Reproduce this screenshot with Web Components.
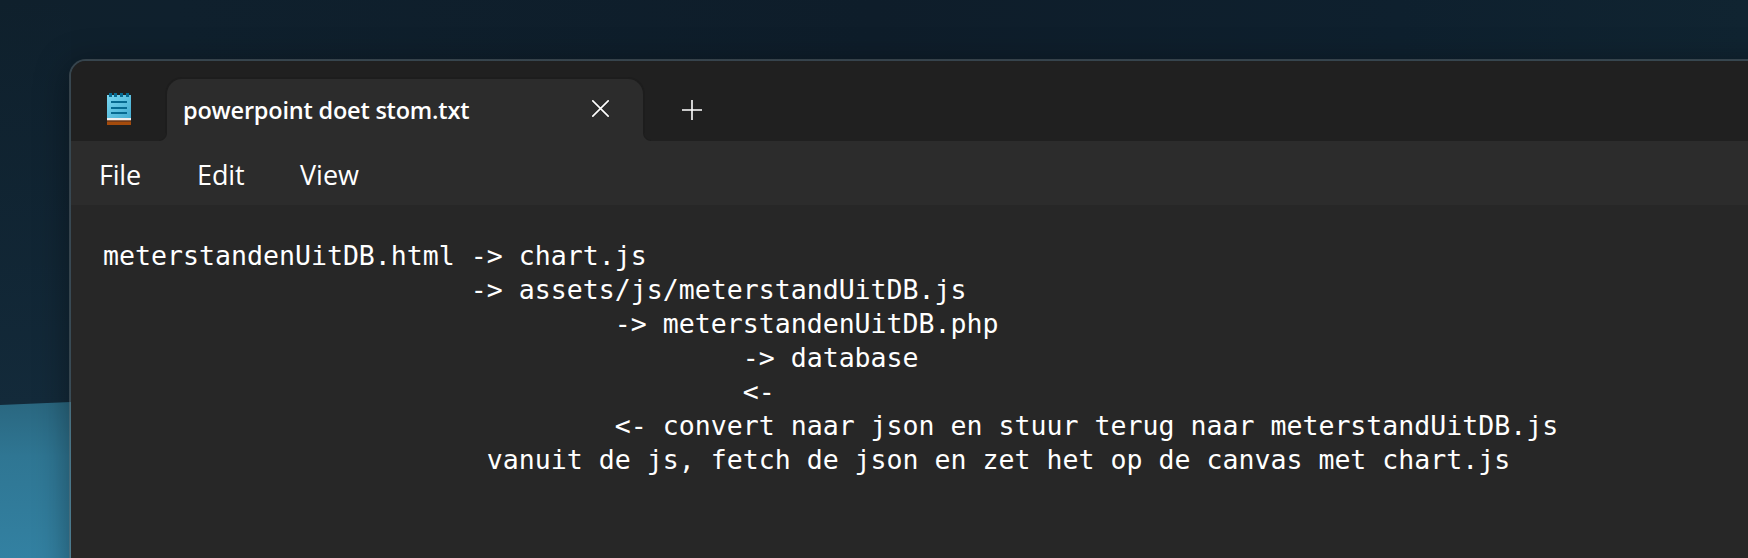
<!DOCTYPE html>
<html lang="nl">
<head>
<meta charset="utf-8">
<title>powerpoint doet stom.txt</title>
<style>
html, body { margin: 0; height: 100%; overflow: hidden; background: #0e1c28; }
</style>
</head>
<body>
<desk-top>
  <note-window>
    <title-bar slot="title"><note-tab>powerpoint doet stom.txt</note-tab></title-bar>
    <menu-bar slot="menu">
      <menu-entry style="--w:98px;--ls:-.2px">File</menu-entry>
      <menu-entry style="--w:103px;--ls:-.1px">Edit</menu-entry>
      <menu-entry style="--w:100px;--ls:0px">View</menu-entry>
    </menu-bar>
    <text-editor>meterstandenUitDB.html -&gt; chart.js
                       -&gt; assets/js/meterstandUitDB.js
                                -&gt; meterstandenUitDB.php
                                        -&gt; database
                                        &lt;-
                                &lt;- convert naar json en stuur terug naar meterstandUitDB.js
                        vanuit de js, fetch de json en zet het op de canvas met chart.js</text-editor>
  </note-window>
</desk-top>
<script>
function define(name, html) {
  customElements.define(name, class extends HTMLElement {
    constructor() {
      super();
      this.attachShadow({ mode: "open" }).innerHTML = html.trim();
    }
  });
}

define("desk-top", `
<style>
:host { display: grid; grid-template: 558px / 1748px; overflow: hidden; }
svg { grid-area: 1 / 1; display: block; }
.layer { grid-area: 1 / 1; padding: 59px 0 0 69px; display: grid; z-index: 1; }
</style>
<svg width="1748" height="558" viewBox="0 0 1748 558">
  <defs>
    <linearGradient id="sky" x1="0" x2="1"><stop offset="0" stop-color="#0f202c"/><stop offset=".1" stop-color="#0f202d"/><stop offset=".5" stop-color="#0e1d2a"/><stop offset=".8" stop-color="#0e202e"/><stop offset="1" stop-color="#102431"/></linearGradient>
    <linearGradient id="side" x1="0" y1="0" x2="0" y2="1"><stop offset="0" stop-color="#112838" stop-opacity="0"/><stop offset="1" stop-color="#132a3a"/></linearGradient>
    <linearGradient id="sea" x1="0" y1="0" x2="0" y2="1"><stop offset="0" stop-color="#2a6780"/><stop offset=".35" stop-color="#2f7693"/><stop offset="1" stop-color="#3381a2"/></linearGradient>
  </defs>
  <path fill="url(#sky)" d="M0 0h1748v558H0z"/>
  <path fill="url(#side)" d="M0 0h71v405H0z"/>
  <path fill="url(#sea)" d="M0 405L71 402V558H0z"/>
</svg>
<div class="layer"><slot></slot></div>`);

define("note-window", `
<style>
:host { display: block; height: 520px; width: 1720px; box-sizing: border-box; border: 2px solid rgba(105,115,120,.45); border-radius: 17px 0 0 0; box-shadow: 0 6px 34px rgba(0,0,0,.38); background: #272727; background-clip: padding-box; overflow: hidden; }
</style>
<slot name="title"></slot><slot name="menu"></slot><slot></slot>`);

define("title-bar", `
<style>
:host { display: flex; height: 80px; background: #202020; box-sizing: border-box; }
.book { display: block; margin: 31px 34px 0 34px; }
.plus { display: block; margin: 39px 0 0 39px; }
</style>
<svg class="book" width="28" height="34" viewBox="0 0 28 34">
  <defs><linearGradient id="p" x1="0" y1="0" x2="1" y2="1"><stop offset="0" stop-color="#78d6f0"/><stop offset="1" stop-color="#43abd0"/></linearGradient></defs>
  <path fill="#a44b0c" d="M2 28h24v5H2z"/><path fill="#733a17" d="M2 28h24v2H2z"/>
  <path fill="#eee" d="M2 26h24v2.2H2z"/>
  <path fill="url(#p)" d="M2 3h24v23H2z"/>
  <path stroke="#066a91" stroke-width="3" d="M5.500 1v4M10.500 1v4M16.500 1v4M22.500 1v4"/>
  <path stroke="#066a91" stroke-width="2" d="M6 10h16M6 16h16M6 21h16"/>
</svg>
<slot></slot>
<svg class="plus" width="20" height="20" viewBox="0 0 20 20"><path stroke="#fff" stroke-width="1.600" d="M10 0v20M0 10h20"/></svg>`);

define("note-tab", `
<style>
:host { display: flex; position: relative; width: 476px; height: 62px; margin-top: 18px; box-sizing: border-box; background: #2c2c2c; border-radius: 15px 15px 0 0; box-shadow: 0 0 0 2px #1d1d1d; color: #fff; font: 600 23.500px/30px "Open Sans", sans-serif; }
.name { width: 409px; padding: 16px 0 0 16px; box-sizing: border-box; white-space: pre; letter-spacing: -.2px; }
.x { display: block; margin: 21px 0 0 16px; }
.foot { position: absolute; bottom: 0; width: 8px; height: 8px; }
.l { right: 100%; background: radial-gradient(circle at 0 0, #202020 6px, #1d1d1d 7.500px, #2c2c2c 8.500px); }
.r { left: 100%; background: radial-gradient(circle at 100% 0, #202020 6px, #1d1d1d 7.500px, #2c2c2c 8.500px); }
</style>
<div class="name"><slot></slot></div>
<svg class="x" width="17" height="17" viewBox="0 0 17 17"><path stroke="#fff" stroke-width="1.600" d="M.3.300l16.400 16.400M16.700.300L.3 16.700"/></svg>
<i class="foot l"></i><i class="foot r"></i>`);

define("menu-bar", `
<style>
:host { display: flex; position: relative; height: 64px; background: #2c2c2c; padding-left: 28px; box-sizing: border-box; }
</style>
<slot></slot>`);

define("menu-entry", `
<style>
:host { display: block; width: var(--w); padding-top: 15px; color: #fff; font: 400 27px/38px "Open Sans", sans-serif; letter-spacing: var(--ls); }
</style>
<slot></slot>`);

define("text-editor", `
<style>
:host { display: block; padding: 34px 0 0 32px; background: #272727; color: #fff; font: 26.575px/34px "DejaVu Sans Mono", monospace; }
slot { display: block; white-space: pre; }
</style>
<slot></slot>`);
</script>
</body>
</html>
